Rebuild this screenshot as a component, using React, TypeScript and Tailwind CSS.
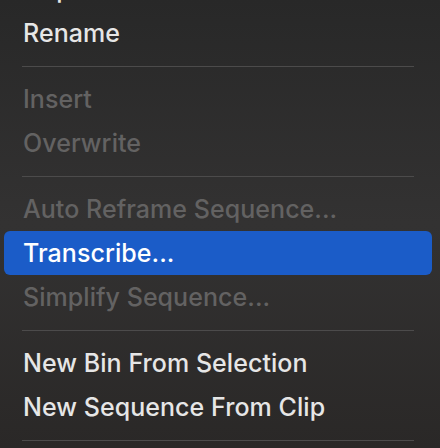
import React from 'react';

type Entry =
  | { kind: 'item'; label: string; disabled?: boolean; active?: boolean }
  | { kind: 'sep' };

const entries: Entry[] = [
  { kind: 'item', label: 'Duplicate' },
  { kind: 'item', label: 'Rename' },
  { kind: 'sep' },
  { kind: 'item', label: 'Insert', disabled: true },
  { kind: 'item', label: 'Overwrite', disabled: true },
  { kind: 'sep' },
  { kind: 'item', label: 'Auto Reframe Sequence...', disabled: true },
  { kind: 'item', label: 'Transcribe...', active: true },
  { kind: 'item', label: 'Simplify Sequence...', disabled: true },
  { kind: 'sep' },
  { kind: 'item', label: 'New Bin From Selection' },
  { kind: 'item', label: 'New Sequence From Clip' },
  { kind: 'sep' },
];

function App() {
  return (
    <div
      className="w-[440px] h-[448px] overflow-hidden bg-gradient-to-b from-[#282828] via-[#333232] to-[#2a2827]"
      style={{ fontFamily: 'Inter, "Noto Sans", sans-serif' }}
    >
      <div className="flex flex-col -mt-[33px]">
        {entries.map((e, i) =>
          e.kind === 'sep' ? (
            <div key={i} className="h-[22px] flex items-center pl-[22px] pr-[26px]">
              <div className="h-px w-full bg-[#4c4b4b]" />
            </div>
          ) : (
            <div
              key={i}
              className={`h-[44px] ml-1 mr-2 pl-[19px] flex items-center rounded-[6px] text-[25px] font-medium leading-none tracking-[0.05px] ${
                e.active
                  ? 'bg-[#1b5cc8] text-white'
                  : e.disabled
                  ? 'text-[#636262]'
                  : 'text-[#e6e6e6]'
              }`}
            >
              {e.label}
            </div>
          )
        )}
      </div>
    </div>
  );
}

export default App;
